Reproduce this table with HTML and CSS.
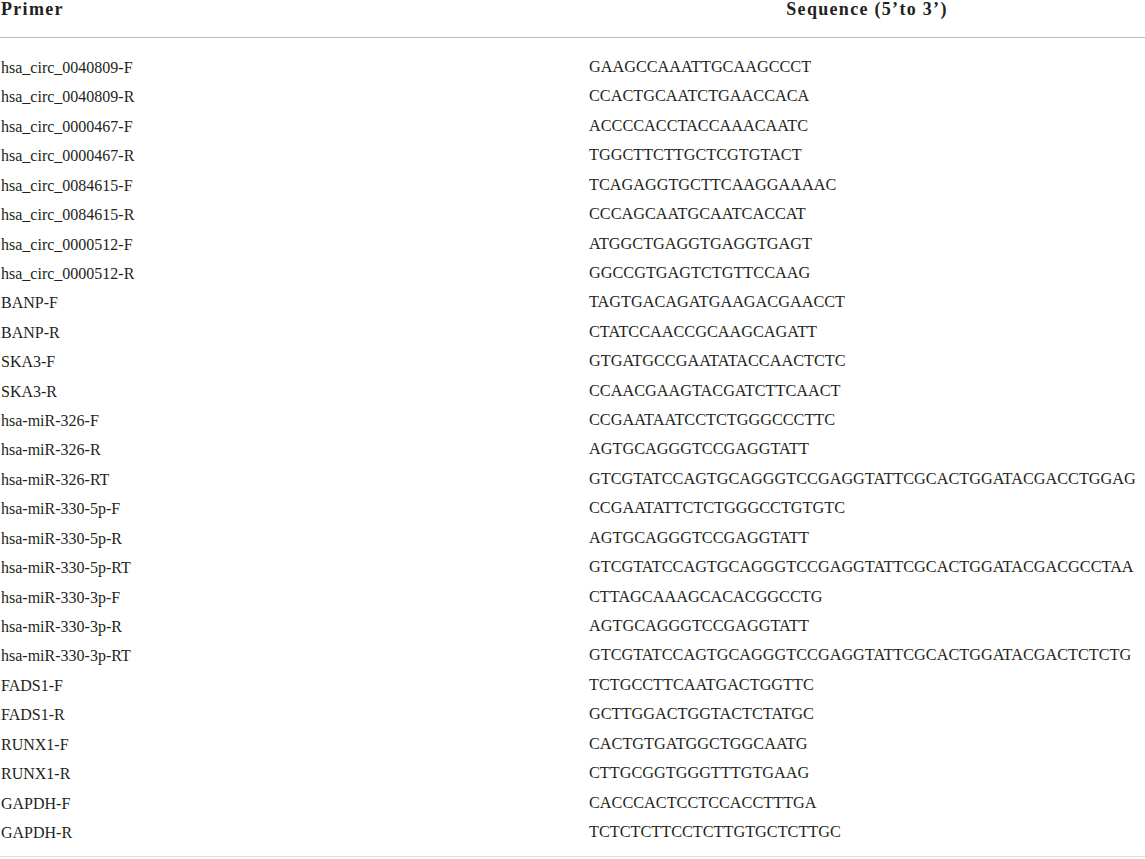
FILE: index.html
```html
<!DOCTYPE html>
<html>
<head>
<meta charset="utf-8">
<link rel="stylesheet" href="styles.css">
</head>
<body>
<table class="primers">
  <thead>
    <tr><th class="col-primer">Primer</th><th class="col-seq">Sequence (5’to 3’)</th></tr>
  </thead>
  <tbody>
    <tr><td>hsa_circ_0040809-F</td><td>GAAGCCAAATTGCAAGCCCT</td></tr>
    <tr><td>hsa_circ_0040809-R</td><td>CCACTGCAATCTGAACCACA</td></tr>
    <tr><td>hsa_circ_0000467-F</td><td>ACCCCACCTACCAAACAATC</td></tr>
    <tr><td>hsa_circ_0000467-R</td><td>TGGCTTCTTGCTCGTGTACT</td></tr>
    <tr><td>hsa_circ_0084615-F</td><td>TCAGAGGTGCTTCAAGGAAAAC</td></tr>
    <tr><td>hsa_circ_0084615-R</td><td>CCCAGCAATGCAATCACCAT</td></tr>
    <tr><td>hsa_circ_0000512-F</td><td>ATGGCTGAGGTGAGGTGAGT</td></tr>
    <tr><td>hsa_circ_0000512-R</td><td>GGCCGTGAGTCTGTTCCAAG</td></tr>
    <tr><td>BANP-F</td><td>TAGTGACAGATGAAGACGAACCT</td></tr>
    <tr><td>BANP-R</td><td>CTATCCAACCGCAAGCAGATT</td></tr>
    <tr><td>SKA3-F</td><td>GTGATGCCGAATATACCAACTCTC</td></tr>
    <tr><td>SKA3-R</td><td>CCAACGAAGTACGATCTTCAACT</td></tr>
    <tr><td>hsa-miR-326-F</td><td>CCGAATAATCCTCTGGGCCCTTC</td></tr>
    <tr><td>hsa-miR-326-R</td><td>AGTGCAGGGTCCGAGGTATT</td></tr>
    <tr><td>hsa-miR-326-RT</td><td>GTCGTATCCAGTGCAGGGTCCGAGGTATTCGCACTGGATACGACCTGGAG</td></tr>
    <tr><td>hsa-miR-330-5p-F</td><td>CCGAATATTCTCTGGGCCTGTGTC</td></tr>
    <tr><td>hsa-miR-330-5p-R</td><td>AGTGCAGGGTCCGAGGTATT</td></tr>
    <tr><td>hsa-miR-330-5p-RT</td><td>GTCGTATCCAGTGCAGGGTCCGAGGTATTCGCACTGGATACGACGCCTAA</td></tr>
    <tr><td>hsa-miR-330-3p-F</td><td>CTTAGCAAAGCACACGGCCTG</td></tr>
    <tr><td>hsa-miR-330-3p-R</td><td>AGTGCAGGGTCCGAGGTATT</td></tr>
    <tr><td>hsa-miR-330-3p-RT</td><td>GTCGTATCCAGTGCAGGGTCCGAGGTATTCGCACTGGATACGACTCTCTG</td></tr>
    <tr><td>FADS1-F</td><td>TCTGCCTTCAATGACTGGTTC</td></tr>
    <tr><td>FADS1-R</td><td>GCTTGGACTGGTACTCTATGC</td></tr>
    <tr><td>RUNX1-F</td><td>CACTGTGATGGCTGGCAATG</td></tr>
    <tr><td>RUNX1-R</td><td>CTTGCGGTGGGTTTGTGAAG</td></tr>
    <tr><td>GAPDH-F</td><td>CACCCACTCCTCCACCTTTGA</td></tr>
    <tr><td>GAPDH-R</td><td>TCTCTCTTCCTCTTGTGCTCTTGC</td></tr>
  </tbody>
</table>
</body>
</html>
```
FILE: styles.css
```css
html, body {
  margin: 0;
  padding: 0;
  background: #ffffff;
}
body {
  width: 1145px;
  height: 859px;
  overflow: hidden;
  font-family: "Liberation Serif", "Times New Roman", serif;
  color: #231f20;
}
.primers {
  width: 1145px;
  border-collapse: collapse;
  table-layout: fixed;
}
.primers th {
  font-size: 18px;
  font-weight: bold;
  letter-spacing: 1.3px;
  line-height: 19px;
  padding: 0 0 18px 0;
  border-bottom: 1px solid #b8b8b8;
  vertical-align: top;
}
.col-primer {
  width: 588px;
  text-align: left;
  padding-left: 1px !important;
}
.col-seq {
  text-align: center;
}
.primers td {
  font-size: 16px;
  line-height: 29.42px;
  padding: 0;
  white-space: nowrap;
  vertical-align: top;
}
.primers td:first-child {
  padding-left: 1px;
}
.primers td:last-child {
  font-size: 16.25px;
}
.primers tbody tr:first-child td {
  padding-top: 15px;
}
.primers tbody tr:last-child td {
  padding-bottom: 9px;
  border-bottom: 1px solid #e2e2e2;
}
```
